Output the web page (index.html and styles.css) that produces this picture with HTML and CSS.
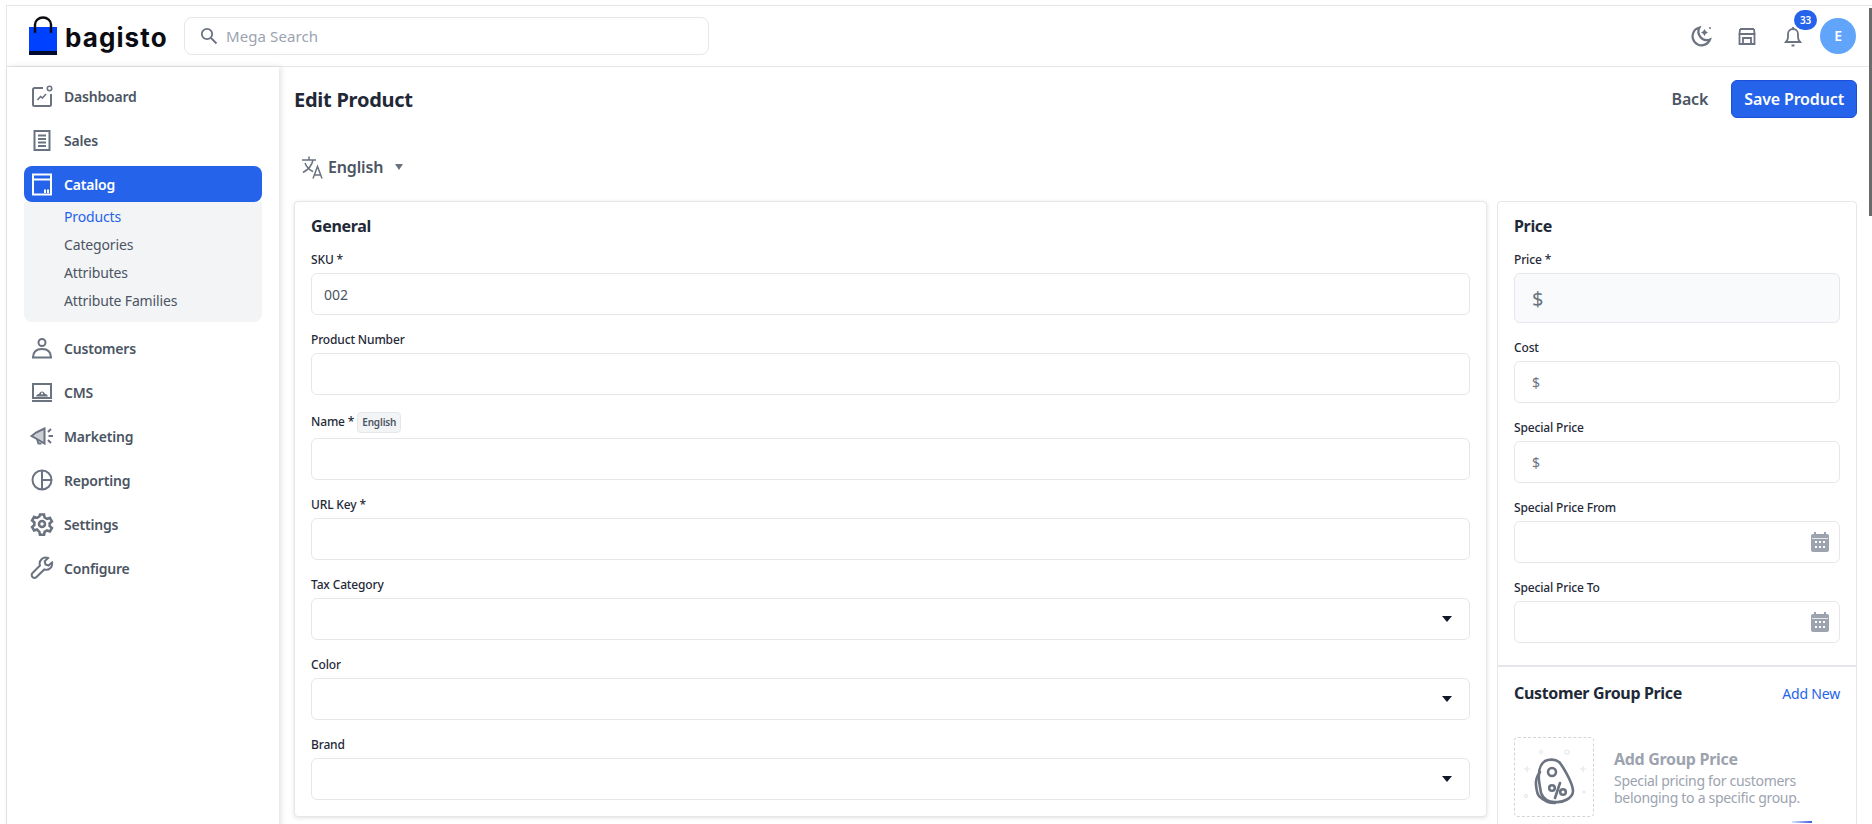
FILE: index.html

```html
<!DOCTYPE html>
<html lang="en">
<head>
    <meta charset="UTF-8">
    <meta name="viewport" content="width=device-width, initial-scale=1.0">
    <title>Edit Product</title>
    <link rel="stylesheet" href="styles.css">
</head>
<body>
    <div class="scroll-thumb"></div>
    <div class="app">
        <header class="topbar">
            <a href="#" class="logo">
                <svg width="30" height="40" viewBox="0 0 30 40">
                    <path d="M1 11h28v28H1z" fill="#0041ff"/>
                    <path d="M1 35h28v4H1z" fill="#000a2e"/>
                    <path d="M7 17V8.500a8 7 0 0 1 16 0V17" fill="none" stroke="#0b0b12" stroke-width="2.400"/>
                </svg>
                <span class="logo-text">bagisto</span>
            </a>
            <div class="search">
                <svg width="18" height="18" viewBox="0 0 18 18" fill="none" stroke="#6b7280" stroke-width="1.800"><circle cx="7" cy="7" r="5.200"/><path d="M11 11l5.500 5.500"/></svg>
                <input type="text" placeholder="Mega Search">
            </div>
            <div class="top-actions">
                <svg class="top-icon" width="24" height="24" viewBox="0 0 24 24" fill="none" stroke="#6b7280" stroke-width="2.200"><path d="M10.500 3.500a9 9 0 1 0 10.500 12 8.500 8.500 0 0 1-10.500-12z"/><path d="M15.500 5l1.300 2.200L19 8.500l-2.200 1.300-1.300 2.200-1.300-2.200L12 8.500l2.200-1.300z" fill="#6b7280" stroke="none"/><circle cx="21" cy="4" r="1" fill="#6b7280" stroke="none"/></svg>
                <svg class="top-icon" width="24" height="24" viewBox="0 0 24 24" fill="none" stroke="#6b7280" stroke-width="1.800"><path d="M5 5h14M3.500 10h17M4.500 10v10h15V10M4.500 10L5 5M19.500 10L19 5M8 20v-6h8v6"/></svg>
                <div class="bell">
                    <svg width="24" height="24" viewBox="0 0 24 24" fill="none" stroke="#6b7280" stroke-width="1.800"><path d="M5 18c1.500-1.500 2-3 2-5V10a5 5 0 0 1 10 0v3c0 2 .5 3.500 2 5zM4 18h16M12 3v2"/><path d="M10.500 21.500h3" stroke-width="2"/></svg>
                    <span class="badge">33</span>
                </div>
                <div class="avatar">E</div>
            </div>
        </header>

        <div class="layout">
            <aside class="sidebar">
                <nav class="nav">
                    <a href="#" class="nav-link">
                        <svg width="24" height="24" viewBox="0 0 24 24" fill="none" stroke="currentColor" stroke-width="2"><path d="M13 4H4.500A1.500 1.500 0 0 0 3 5.500v15A1.500 1.500 0 0 0 4.500 22h15a1.500 1.500 0 0 0 1.500-1.500V10"/><circle cx="19.500" cy="4.500" r="2.200" stroke-width="1.600"/><path d="M7.500 16l3-3.500 2 1.500 3.500-4" stroke-width="1.600"/></svg>
                        Dashboard
                    </a>
                    <a href="#" class="nav-link">
                        <svg width="24" height="24" viewBox="0 0 24 24" fill="none" stroke="currentColor" stroke-width="2"><path d="M4.500 3h15v19h-15zM8 7.500h8M8 11h8M8 14.500h8M8 18h8"/></svg>
                        Sales
                    </a>
                    <div class="nav-group">
                        <a href="#" class="nav-link active">
                            <svg width="24" height="24" viewBox="0 0 24 24" fill="none" stroke="currentColor" stroke-width="2"><path d="M3 2.500h18v20H3zM3 7.500h18"/><path d="M15 17.500v3.500M18 17.500v3.500" stroke-width="2"/></svg>
                            Catalog
                        </a>
                        <div class="sub-nav">
                            <a href="#" class="sub-link current">Products</a>
                            <a href="#" class="sub-link">Categories</a>
                            <a href="#" class="sub-link">Attributes</a>
                            <a href="#" class="sub-link">Attribute Families</a>
                        </div>
                    </div>
                    <a href="#" class="nav-link">
                        <svg width="24" height="24" viewBox="0 0 24 24" fill="none" stroke="currentColor" stroke-width="2"><circle cx="12" cy="6.500" r="3.500"/><path d="M3 21.500c0-5.500 3.500-8.500 9-8.500s9 3 9 8.500zM2 21.500h20"/></svg>
                        Customers
                    </a>
                    <a href="#" class="nav-link">
                        <svg width="24" height="24" viewBox="0 0 24 24" fill="none" stroke="currentColor" stroke-width="2"><path d="M3 4h18v14H3zM2 21h20"/><path d="M6 16.500c.5-2 2-2.500 3-2.500.5-1.500 1.500-2.500 3-2.500s2.500 1 3 2.500c1 0 2.500.5 3 2.500z" fill="currentColor" stroke="none"/><circle cx="12" cy="13.500" r="1" fill="#fff" stroke="none"/></svg>
                        CMS
                    </a>
                    <a href="#" class="nav-link">
                        <svg width="24" height="24" viewBox="0 0 24 24" fill="none" stroke="currentColor" stroke-width="2"><path d="M14.500 4.500L6 8.500 1.500 12 6 14.500l8.500 5z" fill="currentColor" fill-opacity=".35"/><path d="M7 15l1.500 4.500h3"/><path d="M18 8l3-3M18.500 12H23M18 16l3 3" stroke-width="2"/></svg>
                        Marketing
                    </a>
                    <a href="#" class="nav-link">
                        <svg width="24" height="24" viewBox="0 0 24 24" fill="none" stroke="currentColor" stroke-width="2"><circle cx="12" cy="12" r="9.500"/><path d="M12 2.500v19M12 12h9.500"/></svg>
                        Reporting
                    </a>
                    <a href="#" class="nav-link">
                        <svg width="24" height="24" viewBox="0 0 24 24" fill="none" stroke="currentColor" stroke-width="2.600"><circle cx="12" cy="12" r="3"/><path d="M10 2.500h4l.6 3 2.400 1.400 2.900-1 2 3.500-2.300 2 .1 1.300-.1 1.300 2.300 2-2 3.500-2.900-1-2.400 1.400-.6 3h-4l-.6-3L7 17.500l-2.900 1-2-3.500 2.300-2-.1-1.300.1-1.300-2.300-2 2-3.500 2.900 1 2.400-1.400z"/></svg>
                        Settings
                    </a>
                    <a href="#" class="nav-link">
                        <svg width="24" height="24" viewBox="0 0 24 24" fill="none" stroke="currentColor" stroke-width="2"><path d="M22 6.500l-3.500 3-3-1-.8-3.200L18 2a6 6 0 0 0-8 7.500L2.500 17a2.800 2.800 0 0 0 4 4l7.800-7.500A6 6 0 0 0 22 6.500z"/></svg>
                        Configure
                    </a>
                </nav>
            </aside>

            <main class="content">
                <div class="page-head">
                    <h1>Edit Product</h1>
                    <div class="page-actions">
                        <a href="#" class="back">Back</a>
                        <button class="btn">Save Product</button>
                    </div>
                </div>

                <div class="locale">
                    <svg width="24" height="24" viewBox="0 0 24 24" fill="none" stroke="#6b7280" stroke-width="1.500"><path d="M1 5h14M8 1.500V5M12 5c-1 5-4.500 9.500-10 12.500M4 8c1.500 4 4.500 7 8 8.500"/><path d="M12 23.500l4.500-12 4.500 12M13.500 20h6"/></svg>
                    <span>English</span>
                    <i class="caret"></i>
                </div>

                <div class="columns">
                    <section class="card general">
                        <h2 class="card-title">General</h2>
                        <div class="field">
                            <label>SKU *</label>
                            <input type="text" value="002">
                        </div>
                        <div class="field">
                            <label>Product Number</label>
                            <input type="text">
                        </div>
                        <div class="field">
                            <label>Name * <span class="tag">English</span></label>
                            <input type="text">
                        </div>
                        <div class="field">
                            <label>URL Key *</label>
                            <input type="text">
                        </div>
                        <div class="field">
                            <label>Tax Category</label>
                            <div class="select-wrap"><select></select></div>
                        </div>
                        <div class="field">
                            <label>Color</label>
                            <div class="select-wrap"><select></select></div>
                        </div>
                        <div class="field">
                            <label>Brand</label>
                            <div class="select-wrap"><select></select></div>
                        </div>
                    </section>

                    <aside class="card side">
                        <div class="side-section">
                            <h2 class="card-title">Price</h2>
                            <div class="field">
                                <label>Price *</label>
                                <div class="money big"><span>$</span><input type="text"></div>
                            </div>
                            <div class="field">
                                <label>Cost</label>
                                <div class="money"><span>$</span><input type="text"></div>
                            </div>
                            <div class="field">
                                <label>Special Price</label>
                                <div class="money"><span>$</span><input type="text"></div>
                            </div>
                            <div class="field">
                                <label>Special Price From</label>
                                <div class="date">
                                    <input type="text">
                                    <svg width="18" height="20" viewBox="0 0 18 20"><path d="M3 0h2v2h8V0h2v2h1a2 2 0 0 1 2 2v14a2 2 0 0 1-2 2H2a2 2 0 0 1-2-2V4a2 2 0 0 1 2-2h1z" fill="#9ca3af"/><path d="M1 6h16v1H1z" fill="#e5e7eb"/><path d="M4 9h2v2H4zM8 9h2v2H8zM12 9h2v2h-2zM4 14h2v2H4zM8 14h2v2H8zM12 14h2v2h-2z" fill="#fff"/></svg>
                                </div>
                            </div>
                            <div class="field">
                                <label>Special Price To</label>
                                <div class="date">
                                    <input type="text">
                                    <svg width="18" height="20" viewBox="0 0 18 20"><path d="M3 0h2v2h8V0h2v2h1a2 2 0 0 1 2 2v14a2 2 0 0 1-2 2H2a2 2 0 0 1-2-2V4a2 2 0 0 1 2-2h1z" fill="#9ca3af"/><path d="M1 6h16v1H1z" fill="#e5e7eb"/><path d="M4 9h2v2H4zM8 9h2v2H8zM12 9h2v2h-2zM4 14h2v2H4zM8 14h2v2H8zM12 14h2v2h-2z" fill="#fff"/></svg>
                                </div>
                            </div>
                        </div>

                        <div class="side-section group-price">
                            <div class="group-head">
                                <h2 class="card-title">Customer Group Price</h2>
                                <a href="#" class="add-new">Add New</a>
                            </div>
                            <div class="empty-row">
                                <div class="empty-icon">
                                    <svg width="78" height="78" viewBox="0 0 78 78" fill="none">
                                        <g stroke="#e5e7eb" stroke-width="1.200"><circle cx="26" cy="14" r="1.500"/><circle cx="52" cy="14" r="2"/><path d="M9 31h6M12 28v6M65 31h6M68 28v6"/><circle cx="11" cy="58" r="1.500"/><circle cx="69" cy="54" r="1"/></g>
                                        <g stroke="#6b7280" stroke-width="2.600" stroke-linejoin="round" stroke-linecap="round"><path d="M30 23c4-2 10-2 14 1 3 3 14 21 14 29 0 7-10 12-18 11-7 0-12-4-14-9-1-7-3-13-2-19 0-6 3-11 6-13z"/><path d="M25 34c-3 4-4.500 8-4 13 .5 5 1 9 3 11 4 4 10 7 16 7"/><circle cx="37" cy="34" r="4"/><circle cx="37" cy="50" r="2.800"/><circle cx="48" cy="54" r="2.800"/><path d="M45 45l-5 15"/></g>
                                    </svg>
                                </div>
                                <div class="empty-text">
                                    <h3>Add Group Price</h3>
                                    <p>Special pricing for customers belonging to a specific group.</p>
                                </div>
                            </div>
                            <div class="peek"></div>
                        </div>
                    </aside>
                </div>
            </main>
        </div>
    </div>
</body>
</html>
```

FILE: styles.css

```css
* {
    box-sizing: border-box;
}
html, body {
    height: 100%;
}
body {
    margin: 0;
    padding: 5px 0 0 6px;
    overflow: hidden;
    background: #fff;
    color: #1f2937;
    font-family: "Noto Sans", sans-serif;
    letter-spacing: -0.15px;
}
a {
    text-decoration: none;
}
.scroll-thumb {
    position: absolute;
    top: 8px;
    right: 0;
    width: 3px;
    height: 208px;
    background: #6b6b6b;
}
.app {
    border-top: 1px solid #e5e7eb;
    border-left: 1px solid #e5e7eb;
}

/* top bar */
.topbar {
    display: flex;
    align-items: center;
    height: 61px;
    padding: 0 16px 0 21px;
    border-bottom: 1px solid #e5e7eb;
}
.logo {
    display: flex;
    align-items: flex-end;
    gap: 7px;
    width: 156px;
    color: #0b0b12;
}
.logo svg {
    flex: none;
}
.logo-text {
    font-family: Inter, sans-serif;
    font-size: 26px;
    font-weight: 700;
    line-height: 36px;
    letter-spacing: 1.1px;
}
.search {
    display: flex;
    align-items: center;
    gap: 8px;
    width: 525px;
    height: 38px;
    padding: 0 15px;
    border: 1px solid #e5e7eb;
    border-radius: 8px;
}
.search input {
    flex: 1;
    border: none;
    outline: none;
    padding: 0;
    font-family: inherit;
    font-size: 15px;
    letter-spacing: 0.1px;
}
.search input::placeholder {
    color: #9ca3af;
}
.top-actions {
    display: flex;
    align-items: center;
    margin-left: auto;
}
.top-icon {
    margin-right: 22px;
}
.bell {
    position: relative;
    display: flex;
    margin-right: 15px;
}
.badge {
    position: absolute;
    top: -14px;
    left: 13px;
    width: 23px;
    height: 20px;
    border-radius: 10px;
    background: #2563eb;
    color: #fff;
    font-size: 10px;
    font-weight: 600;
    line-height: 20px;
    text-align: center;
}
.avatar {
    width: 36px;
    height: 36px;
    border-radius: 50%;
    background: #60a5fa;
    color: #fff;
    font-size: 14px;
    font-weight: 600;
    line-height: 36px;
    text-align: center;
}

/* sidebar */
.layout {
    display: flex;
}
.sidebar {
    flex: none;
    width: 272px;
    height: 800px;
    padding: 11px 17px 0;
    box-shadow: 2px 0 6px rgba(0, 0, 0, 0.12);
}
.nav {
    display: flex;
    flex-direction: column;
    gap: 8px;
}
.nav-link {
    display: flex;
    align-items: center;
    gap: 10px;
    height: 36px;
    padding: 0 6px;
    border-radius: 8px;
    color: #4b5563;
    font-size: 14px;
    font-weight: 600;
    letter-spacing: -0.2px;
}
.nav-link svg {
    color: #6b7280;
}
.nav-link.active {
    background: #2563eb;
    color: #fff;
}
.nav-link.active svg {
    color: #fff;
}
.sub-nav {
    display: flex;
    flex-direction: column;
    padding: 1px 0 7px;
    border-radius: 0 0 8px 8px;
    background: #f3f4f6;
}
.sub-link {
    height: 28px;
    padding-left: 40px;
    color: #4b5563;
    font-size: 14px;
    line-height: 28px;
}
.sub-link.current {
    color: #2563eb;
}

/* page */
.content {
    flex: 1;
    min-width: 0;
    padding: 13px 15px 0;
}
.page-head {
    display: flex;
    align-items: center;
    justify-content: space-between;
    height: 38px;
}
h1 {
    margin: 0;
    font-size: 20px;
    font-weight: 700;
    letter-spacing: -0.25px;
    color: #1f2937;
}
.page-actions {
    display: flex;
    align-items: center;
    gap: 23px;
}
.back {
    color: #4b5563;
    font-size: 16px;
    font-weight: 600;
}
.btn {
    height: 38px;
    padding: 0 12px;
    border: 1px solid #1d4ed8;
    border-radius: 6px;
    background: #2563eb;
    color: #fff;
    font-family: inherit;
    font-size: 16px;
    font-weight: 600;
    letter-spacing: -0.15px;
}
.locale {
    display: flex;
    align-items: center;
    gap: 3px;
    height: 36px;
    margin: 31px 0 16px;
    padding-left: 7px;
    color: #4b5563;
    font-size: 16px;
    font-weight: 600;
}
.caret {
    width: 0;
    height: 0;
    margin-left: 9px;
    border: 4.500px solid transparent;
    border-top: 6px solid #6b7280;
    border-bottom: 0;
}
.columns {
    display: flex;
    align-items: flex-start;
    gap: 10px;
}
.card {
    border: 1px solid #e5e7eb;
    border-radius: 4px;
    background: #fff;
}
.general {
    flex: 1;
    min-width: 0;
    padding: 14px 16px 16px;
    box-shadow: 0 1px 4px rgba(0, 0, 0, 0.12);
}
.side {
    flex: none;
    width: 360px;
    height: 700px;
}
.card-title {
    margin: 0 0 16px;
    color: #1f2937;
    font-size: 16px;
    font-weight: 700;
    line-height: 20px;
    letter-spacing: -0.35px;
}

/* form fields */
.field {
    margin-bottom: 17px;
}
.general .field:last-child {
    margin-bottom: 0;
}
.field label {
    display: block;
    margin-bottom: 5px;
    color: #1f2937;
    font-size: 12px;
    font-weight: 500;
    line-height: 16px;
}
.field input,
.field select {
    display: block;
    width: 100%;
    height: 42px;
    padding: 0 12px;
    border: 1px solid #e5e7eb;
    border-radius: 6px;
    outline: none;
    background: #fff;
    color: #4b5563;
    font-family: inherit;
    font-size: 14px;
}
.field select {
    appearance: none;
}
.tag {
    display: inline-block;
    height: 21px;
    padding: 0 4px;
    border: 1px solid #e5e7eb;
    border-radius: 4px;
    background: #f3f4f6;
    color: #4b5563;
    font-size: 10px;
    font-weight: 600;
    line-height: 19px;
}
.select-wrap {
    position: relative;
}
.select-wrap::after {
    content: "";
    position: absolute;
    top: 18px;
    right: 18px;
    border: 5px solid transparent;
    border-top: 6px solid #111827;
    border-bottom: 0;
}
.money {
    display: flex;
    align-items: center;
    height: 42px;
    padding-left: 17px;
    border: 1px solid #e5e7eb;
    border-radius: 6px;
    color: #6b7280;
    font-size: 14px;
}
.money input {
    flex: 1;
    height: 38px;
    min-width: 0;
    border: none;
    background: transparent;
}
.money.big {
    height: 50px;
    background: #f9fafb;
    font-size: 20px;
}
.date {
    position: relative;
}
.date svg {
    position: absolute;
    top: 11px;
    right: 11px;
}

/* right column */
.side-section {
    padding: 14px 16px 16px;
}
.side-section .field:last-child {
    margin-bottom: 6px;
}
.group-price {
    border-top: 2px solid #e5e7eb;
    padding-top: 16px;
}
.group-head {
    display: flex;
    align-items: center;
    justify-content: space-between;
    margin-bottom: 34px;
}
.group-head .card-title {
    margin: 0;
}
.add-new {
    color: #2563eb;
    font-size: 14px;
    font-weight: 400;
    letter-spacing: -0.2px;
}
.empty-row {
    display: flex;
    align-items: center;
    gap: 20px;
}
.empty-icon {
    display: flex;
    align-items: center;
    justify-content: center;
    flex: none;
    width: 80px;
    height: 80px;
    border: 1px dashed #d1d5db;
    border-radius: 4px;
}
.empty-text h3 {
    margin: 0 0 2px;
    color: #9ca3af;
    font-size: 16px;
    font-weight: 700;
    line-height: 21px;
    letter-spacing: -0.3px;
}
.empty-text p {
    margin: 0;
    color: #9ca3af;
    font-size: 14px;
    line-height: 17px;
    letter-spacing: -0.3px;
}
.peek {
    width: 20px;
    height: 2px;
    margin: 4px 28px 0 auto;
    background: linear-gradient(90deg, #dbe4fb, #3b5bdb);
}
```
